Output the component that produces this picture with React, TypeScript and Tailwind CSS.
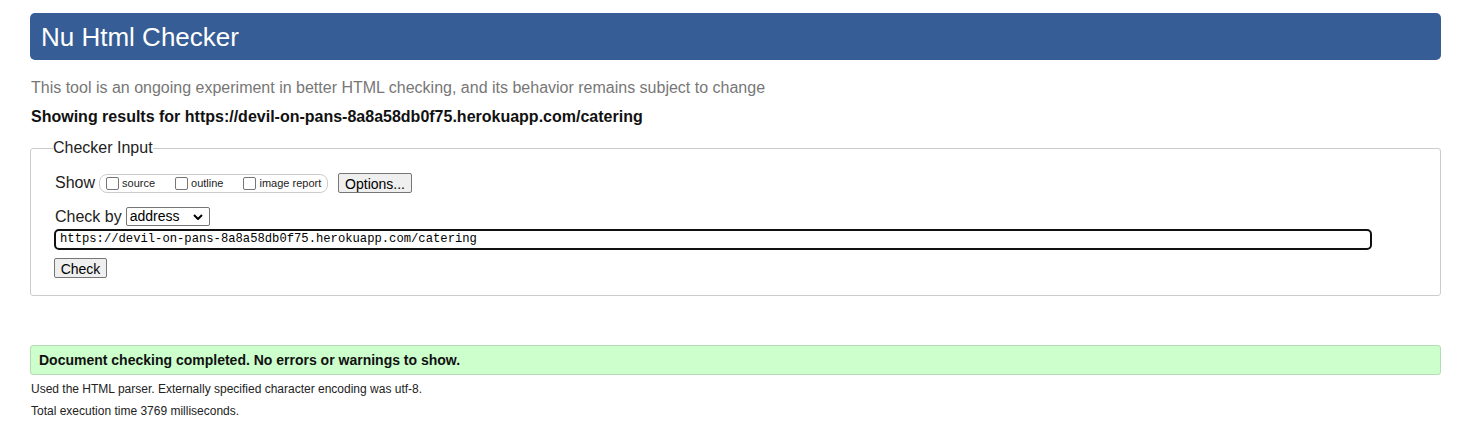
import React from 'react';

const font = { fontFamily: '"Liberation Sans", Arial, sans-serif' };

const Checkbox: React.FC<{ label: string }> = ({ label }) => (
  <label className="flex items-center">
    <span className="w-[13px] h-[13px] border border-[#767676] rounded-[2px] bg-white" />
    <span className="ml-[3px] text-[11px] text-[#222]">{label}</span>
  </label>
);

export default function App() {
  return (
    <div className="min-h-[424px] bg-white pl-[30px] pr-[40px] pt-[13px] text-black" style={font}>
      {/* Header */}
      <div className="h-[47px] bg-[#365d95] rounded-[5px] flex items-center px-[11px]">
        <h1 className="text-[26px] text-white leading-none">Nu Html Checker</h1>
      </div>

      <p className="mt-[19px] ml-px text-[16px] leading-[18px] text-[#777]">
        This tool is an ongoing experiment in better HTML checking, and its behavior remains subject to change
      </p>
      <p className="mt-[11px] ml-px text-[16px] leading-[18px] font-bold text-[#111]">
        Showing results for https://devil-on-pans-8a8a58db0f75.herokuapp.com/catering
      </p>

      {/* Checker input */}
      <fieldset className="mt-[13px] border border-[#ccc] rounded-[3px] pl-[24px] pr-[12px] pb-[14px]">
        <legend className="-ml-[2px] text-[16px] leading-[18px] text-[#222]">Checker Input</legend>

        <div className="mt-[16px] flex items-center h-[20px]">
          <span className="text-[16px] text-[#222]">Show</span>
          <div className="ml-[4px] h-[19px] w-[229px] border border-[#ccc] rounded-[8px] flex items-center pl-[6px] gap-[20px]">
            <Checkbox label="source" />
            <Checkbox label="outline" />
            <Checkbox label="image report" />
          </div>
          <button className="ml-[10px] h-[20px] w-[74px] bg-[#efefef] border border-[#767676] rounded-[2px] text-[14px] text-black">
            Options...
          </button>
        </div>

        <div className="mt-[14px] flex items-center h-[19px]">
          <span className="text-[16px] text-[#222]">Check by</span>
          <div className="relative ml-[4px] h-[19px] w-[84px] border border-[#767676] rounded-[2px] flex items-center pl-[3px]">
            <span className="text-[14px] text-black">address</span>
            <svg className="absolute right-[6px] top-[6px] w-[10px] h-[6px]" viewBox="0 0 10 6" fill="none">
              <path d="M1 1l4 4 4-4" stroke="#000" strokeWidth="2" />
            </svg>
          </div>
        </div>

        <div className="mt-[3px] -ml-px w-[1318px] h-[21px] border-2 border-[#101010] rounded-[5px] flex items-center pl-[4px]">
          <span
            className="text-[12.2px] text-black"
            style={{ fontFamily: '"Liberation Mono", "DejaVu Sans Mono", monospace' }}
          >
            https://devil-on-pans-8a8a58db0f75.herokuapp.com/catering
          </span>
        </div>

        <button className="mt-[8px] -ml-px h-[20px] w-[53px] bg-[#efefef] border border-[#767676] rounded-[2px] text-[14px] text-black">
          Check
        </button>
      </fieldset>

      {/* Result */}
      <div className="mt-[49px] h-[30px] bg-[#ccffcc] border border-[#b4dcb4] rounded-[3px] flex items-center px-[8px]">
        <span className="text-[14px] font-bold text-[#111]">Document checking completed. No errors or warnings to show.</span>
      </div>
      <p className="mt-[7px] ml-px text-[12px] leading-[14px] text-[#222]">
        Used the HTML parser. Externally specified character encoding was utf-8.
      </p>
      <p className="mt-[8px] ml-px text-[12px] leading-[14px] text-[#222]">Total execution time 3769 milliseconds.</p>
    </div>
  );
}
